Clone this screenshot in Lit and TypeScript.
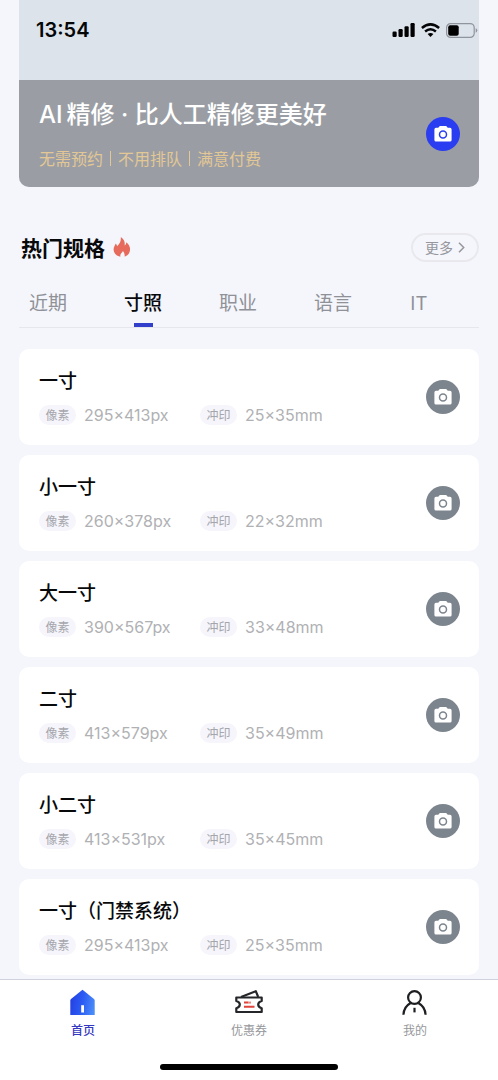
import { LitElement, html, css, svg } from "lit";
import { customElement, property, state } from "lit/decorators.js";

interface Spec {
  name: string;
  pixels: string;
  print: string;
}

const SPECS: Spec[] = [
  { name: "一寸", pixels: "295×413px", print: "25×35mm" },
  { name: "小一寸", pixels: "260×378px", print: "22×32mm" },
  { name: "大一寸", pixels: "390×567px", print: "33×48mm" },
  { name: "二寸", pixels: "413×579px", print: "35×49mm" },
  { name: "小二寸", pixels: "413×531px", print: "35×45mm" },
  { name: "一寸（门禁系统）", pixels: "295×413px", print: "25×35mm" },
];

const TABS = ["近期", "寸照", "职业", "语言", "IT"];

const base = css`
  * {
    box-sizing: border-box;
  }
  button {
    margin: 0;
    padding: 0;
    border: 0;
    background: none;
    color: inherit;
    font: inherit;
    cursor: pointer;
  }
  svg {
    display: block;
  }
`;

@customElement("camera-button")
class CameraButton extends LitElement {
  @property({ type: Boolean, reflect: true }) primary = false;
  @property() label = "";

  static styles = [
    base,
    css`
      :host {
        display: block;
        flex: none;
        --disc: #7c858d;
      }
      :host([primary]) {
        --disc: #2a3df0;
      }
      .disc {
        display: grid;
        place-items: center;
        width: 34px;
        height: 34px;
        border-radius: 50%;
        background: var(--disc);
      }
      .ring {
        stroke: var(--disc);
      }
    `,
  ];

  render() {
    return html`<button class="disc" aria-label=${this.label}>
      <svg width="18" height="16" viewBox="0 0 18 16">
        <path
          fill="#fff"
          d="M2 1.800h2.300L5.200.6Q5.600 0 6.300 0h5.400q.7 0 1.100.6l.9 1.200H16q1.600 0 1.600 1.600v10.600q0 1.600-1.600 1.600H2Q.4 15.600.4 14V3.400Q.4 1.800 2 1.800z"
        />
        <circle class="ring" cx="9" cy="8.400" r="3.500" fill="#fff" stroke-width="1.500" />
      </svg>
    </button>`;
  }
}

@customElement("phone-status")
class PhoneStatus extends LitElement {
  static styles = [
    base,
    css`
      :host {
        display: flex;
        justify-content: space-between;
        padding: 18px 20px 0 36px;
        color: #050608;
      }
      .time {
        font: 600 20px/24px Inter, "Liberation Sans", sans-serif;
      }
      .icons {
        display: flex;
        align-items: center;
        gap: 6px;
        height: 24px;
      }
    `,
  ];

  render() {
    return html`
      <span class="time">13:54</span>
      <div class="icons">
        <svg width="23" height="14" viewBox="0 0 23 14">
          <rect x="0.500" y="8.500" width="4.200" height="5.500" rx="1.200" />
          <rect x="6.500" y="6" width="4.200" height="8" rx="1.200" />
          <rect x="12.500" y="3.200" width="4.200" height="10.800" rx="1.200" />
          <rect x="18.500" y="0" width="4.200" height="14" rx="1.200" />
        </svg>
        <svg width="19" height="14" viewBox="0 0 19 14">
          <g fill="none" stroke="#050608" stroke-width="2.500">
            <path d="M.9 5Q9.500-2.200 18.100 5" />
            <path d="M4.100 8.500q5.400-4.400 10.800 0" />
          </g>
          <path d="M6.600 11q2.900-2.200 5.800 0L9.500 14z" />
        </svg>
        <svg width="32" height="15" viewBox="0 0 32 15">
          <rect x=".6" y=".6" width="27.600" height="13.800" rx="4" fill="none" stroke="#8f949d" stroke-width="1.200" />
          <rect x="2.200" y="2.300" width="10.500" height="10.400" rx="2" />
          <path d="M29.700 5.300q1.600.6 1.600 2.200t-1.600 2.200z" fill="#8f949d" />
        </svg>
      </div>
    `;
  }
}

@customElement("spec-card")
class SpecCard extends LitElement {
  @property({ attribute: false }) spec!: Spec;

  static styles = [
    base,
    css`
      :host {
        display: flex;
        align-items: center;
        justify-content: space-between;
        padding: 0 19px 0 20px;
        border-radius: 10px;
        background: #fff;
      }
      .info {
        padding: 17px 0 20px;
      }
      .name {
        margin: 0 0 11px;
        color: #08090b;
        font-size: 19px;
        font-weight: 500;
        line-height: 28px;
      }
      .sizes {
        display: grid;
        grid-template-columns: 161px auto;
        margin: 0;
      }
      .size {
        display: flex;
        align-items: center;
        gap: 8px;
      }
      .tag {
        width: 37px;
        border-radius: 10px;
        background: #f5f5fb;
        color: #a5a6ac;
        font-size: 12px;
        line-height: 20px;
        text-align: center;
      }
      .value {
        margin: 0;
        color: #b0b1b4;
        font: 400 16px/20px Inter, "Liberation Sans", sans-serif;
      }
    `,
  ];

  render() {
    const { name, pixels, print } = this.spec;
    return html`
      <div class="info">
        <h3 class="name">${name}</h3>
        <dl class="sizes">
          <div class="size"><dt class="tag">像素</dt><dd class="value">${pixels}</dd></div>
          <div class="size"><dt class="tag">冲印</dt><dd class="value">${print}</dd></div>
        </dl>
      </div>
      <camera-button label="拍摄${name}"></camera-button>
    `;
  }
}

const homeIcon = svg`
  <defs>
    <linearGradient id="roof" x1="0" x2="1" y1=".4" y2=".6">
      <stop offset="0" stop-color="#2440e2" />
      <stop offset=".5" stop-color="#2c5cf4" />
      <stop offset="1" stop-color="#4a8cf8" />
    </linearGradient>
  </defs>
  <path fill="url(#roof)" d="M13.500 1.800 25 11Q25.700 11.600 25.700 12.500V27H1.300V12.500Q1.300 11.600 2 11z" />
  <path fill="#fff" d="M12.200 17.200h2.800v7.300h-2.800z" />
`;

const couponIcon = svg`
  <g fill="none" stroke="#25262a" stroke-width="2.200" stroke-linejoin="round">
    <path d="M6 9 20.800 3.200 23.200 9" />
    <path d="M1.300 9.500H26.700V13Q23.200 13.800 23.200 16.600T26.700 20.200V24H1.300V20.200Q4.800 19.400 4.800 16.600T1.300 13z" />
  </g>
  <path d="M9 14.600h4.500M9 18.800h10.500" stroke="#e0433c" stroke-width="2" />
  <path d="M13.500 14.600h2.500" stroke="#e9857e" stroke-width="2" />
`;

const profileIcon = svg`
  <g fill="none" stroke="#1d1e21" stroke-width="2.200">
    <circle cx="13.500" cy="9.500" r="6.400" />
    <path d="M2.400 26.800C2.700 21 6 16.800 9.700 14.900M17.300 14.900C21 16.800 24.300 21 24.600 26.800" />
    <path d="M13.500 19.800v4.600" />
  </g>
`;

const NAV = [
  { label: "首页", icon: homeIcon },
  { label: "优惠券", icon: couponIcon },
  { label: "我的", icon: profileIcon },
];

@customElement("app-root")
class AppRoot extends LitElement {
  @state() private tab = 1;
  @state() private page = 0;

  static styles = [
    base,
    css`
      :host {
        display: flex;
        flex-direction: column;
        height: 100vh;
        overflow: hidden;
        background: #f5f6fb;
        font-family: "Noto Sans CJK SC", sans-serif;
      }
      .content {
        flex: 1;
        min-height: 0;
        overflow: hidden;
        padding: 0 19px;
      }
      .hero {
        border-radius: 0 0 10px 10px;
        overflow: hidden;
        background: #dde3ea;
      }
      .status {
        height: 80px;
        margin: 0 -19px;
      }
      .promo {
        display: flex;
        align-items: center;
        justify-content: space-between;
        padding: 0 19px 0 20px;
        background: #9a9ea4;
      }
      .pitch {
        padding: 17px 0 19px;
      }
      .headline {
        margin: 0 0 15px;
        color: #fff;
        font-family: Inter, "Noto Sans CJK SC", sans-serif;
        font-size: 24px;
        font-weight: 500;
        line-height: 36px;
      }
      .latin {
        margin-right: 4px;
      }
      .perks {
        display: flex;
        align-items: center;
        gap: 7px;
        color: #e3c795;
        font-size: 16px;
        line-height: 20px;
      }
      .bar {
        width: 1px;
        height: 15px;
        background: #e3c795;
      }
      .heading {
        display: flex;
        align-items: center;
        margin-top: 45px;
        padding-left: 2px;
      }
      .title {
        margin: 0 8px 0 0;
        color: #08090b;
        font-size: 21px;
        font-weight: 700;
        line-height: 30px;
      }
      .more {
        display: flex;
        align-items: center;
        justify-content: center;
        gap: 5px;
        width: 68px;
        height: 29px;
        margin-left: auto;
        border: 2px solid #e9e9ed;
        border-radius: 15px;
        color: #96979d;
        font-size: 14px;
        line-height: 20px;
      }
      .tabs {
        display: flex;
        gap: 37px;
        margin-top: 20px;
        border-bottom: 1px solid #e5e7ec;
      }
      .tab {
        display: flex;
        flex-direction: column;
        align-items: center;
        flex: none;
        padding: 6px 10px 0;
        color: #8f9198;
        font-size: 19px;
        line-height: 28px;
      }
      .tab::after {
        content: "";
        width: 19px;
        height: 4px;
        margin-top: 7px;
      }
      .tab.active {
        color: #08090b;
        font-weight: 500;
      }
      .tab.active::after {
        background: #323fcb;
      }
      .list {
        display: flex;
        flex-direction: column;
        gap: 10px;
        margin-top: 21px;
      }
      .bottom {
        flex: none;
        border-top: 1px solid #cfd1dc;
        background: #fff;
      }
      .nav {
        display: grid;
        grid-template-columns: repeat(3, 1fr);
        padding-top: 8px;
      }
      .item {
        display: flex;
        flex-direction: column;
        align-items: center;
        gap: 4px;
        color: #96979b;
        font-size: 12px;
        line-height: 20px;
      }
      .item.active {
        color: #3538c0;
        font-weight: 500;
      }
      .grip {
        width: 178px;
        height: 6px;
        margin: 24px auto 10px;
        border-radius: 3px;
        background: #000;
      }
    `,
  ];

  render() {
    return html`
      <main class="content">
        <section class="hero">
          <phone-status class="status"></phone-status>
          <div class="promo">
            <div class="pitch">
              <h1 class="headline"><span class="latin">AI</span>精修 · 比人工精修更美好</h1>
              <div class="perks">
                <span>无需预约</span><span class="bar"></span><span>不用排队</span><span class="bar"></span
                ><span>满意付费</span>
              </div>
            </div>
            <camera-button primary label="开始拍摄"></camera-button>
          </div>
        </section>

        <div class="heading">
          <h2 class="title">热门规格</h2>
          <svg width="18" height="20" viewBox="0 0 18 20">
            <path
              fill="#e66b5c"
              d="M7.800 0C11 2 12.200 5 11.600 8.500 12.800 8 13.300 6.800 13.200 5.200 16.200 7.500 17.300 10 17 13 16.700 16.500 14.500 18.800 11.500 19.600 12 17.500 11.200 15.500 9.900 14 9.400 15.300 8 16 7.500 17.400 7.200 18.200 7.200 19 7.400 19.700 3.500 19 .8 16.500.6 12.800.5 10 2 8.300 2.800 6.500 3.500 7.500 3.900 8.200 4.100 9.200 6.700 7 8.200 4 7.800 0z"
            />
          </svg>
          <button class="more">
            更多
            <svg width="7" height="11" viewBox="0 0 7 11">
              <path d="M1 .8 5.700 5.500 1 10.200" fill="none" stroke="#96979d" stroke-width="1.500" />
            </svg>
          </button>
        </div>

        <div class="tabs" role="tablist">
          ${TABS.map(
            (name, i) => html`<button
              class="tab ${i === this.tab ? "active" : ""}"
              role="tab"
              aria-selected=${i === this.tab}
              @click=${() => (this.tab = i)}
            >
              ${name}
            </button>`
          )}
        </div>

        <section class="list">${SPECS.map((s) => html`<spec-card .spec=${s}></spec-card>`)}</section>
      </main>

      <footer class="bottom">
        <nav class="nav">
          ${NAV.map(
            ({ label, icon }, i) => html`<button
              class="item ${i === this.page ? "active" : ""}"
              @click=${() => (this.page = i)}
            >
              <svg width="28" height="28" viewBox="0 0 28 28">${icon}</svg>
              ${label}
            </button>`
          )}
        </nav>
        <div class="grip"></div>
      </footer>
    `;
  }
}
